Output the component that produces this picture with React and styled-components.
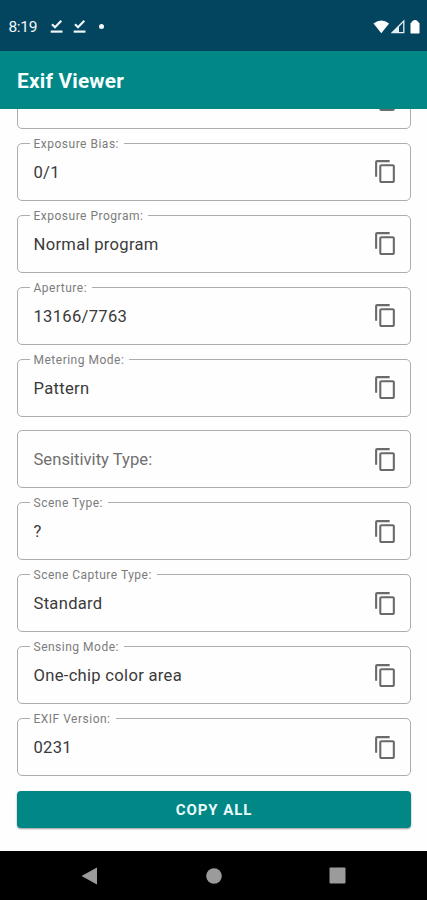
import React from 'react';
import styled, { createGlobalStyle } from 'styled-components';

const GlobalStyle = createGlobalStyle`
  * {
    box-sizing: border-box;
  }
  body {
    margin: 0;
    background: #fff;
    font-family: Roboto, "Liberation Sans", sans-serif;
  }
`;

const Screen = styled.div`
  display: flex;
  flex-direction: column;
  height: 900px;
  overflow: hidden;
  background: #fefefe;
`;

const StatusBar = styled.div`
  display: flex;
  align-items: center;
  flex: none;
  height: 51px;
  padding: 2px 6px 0 8.5px;
  background: #03455f;
  color: #f2f7fa;
`;

const Clock = styled.span`
  width: 41px;
  font-size: 15.5px;
  line-height: 20px;
  letter-spacing: -0.35px;
`;

const Notifications = styled.div`
  display: flex;
  align-items: center;
  flex: 1;
  gap: 10px;
`;

const Dot = styled.span`
  width: 5px;
  height: 5px;
  margin-left: 3px;
  border-radius: 50%;
  background: #f2f7fa;
`;

const SystemIcons = styled.div`
  display: flex;
  align-items: center;
`;

const AppBar = styled.header`
  display: flex;
  align-items: center;
  flex: none;
  height: 58px;
  padding: 2px 17px 0;
  background: #018786;
`;

const Title = styled.h1`
  margin: 0;
  color: #f6ffff;
  font-size: 20.8px;
  font-weight: 700;
  line-height: 26px;
  letter-spacing: 0.2px;
`;

const Content = styled.main`
  flex: 1;
  min-height: 0;
  overflow: hidden;
  padding: 0 16px 0 17px;
`;

const FieldList = styled.div`
  display: flex;
  flex-direction: column;
  gap: 13.93px;
  margin-top: -38.2px;
`;

const Field = styled.div`
  position: relative;
  display: flex;
  align-items: center;
  justify-content: space-between;
  flex: none;
  height: 58px;
  padding: 0 12px 0 15.5px;
  border: 1.5px solid #adadad;
  border-radius: 5px;
`;

const Label = styled.span`
  position: absolute;
  top: -7px;
  left: 11.5px;
  padding: 0 5px 0 4px;
  background: #fefefe;
  color: #7c7c7c;
  font-size: 12px;
  line-height: 14px;
  letter-spacing: 0.5px;
  white-space: nowrap;
`;

const Value = styled.span`
  padding-top: 2px;
  color: ${({ $hint }) => ($hint ? '#707070' : '#3a3a3a')};
  font-size: 16.6px;
  line-height: 20px;
  letter-spacing: ${({ $hint }) => ($hint ? '0.02px' : '0.29px')};
`;

const CopyAll = styled.button`
  display: block;
  width: 100%;
  height: 37px;
  margin: 15px 0 0;
  padding: 0;
  border: 0;
  border-radius: 4px;
  background: #018786;
  box-shadow: 0 1px 2px rgba(0, 0, 0, 0.4);
  color: #e9fbfb;
  font-family: inherit;
  font-size: 15px;
  font-weight: 700;
  letter-spacing: 0.93px;
`;

const NavBar = styled.nav`
  display: flex;
  align-items: center;
  flex: none;
  height: 49px;
  padding: 0 81px;
  justify-content: space-between;
  background: #000;
`;

const fields = [
  { label: '', value: '' },
  { label: 'Exposure Bias:', value: '0/1' },
  { label: 'Exposure Program:', value: 'Normal program' },
  { label: 'Aperture:', value: '13166/7763' },
  { label: 'Metering Mode:', value: 'Pattern' },
  { label: 'Sensitivity Type:', value: '' },
  { label: 'Scene Type:', value: '?' },
  { label: 'Scene Capture Type:', value: 'Standard' },
  { label: 'Sensing Mode:', value: 'One-chip color area' },
  { label: 'EXIF Version:', value: '0231' },
];

const CopyIcon = () => (
  <svg width="25" height="25" viewBox="0 0 24 24" fill="#6a6a6a">
    <path d="M16 1H4c-1.1 0-2 .9-2 2v14h2V3h12V1zm3 4H8c-1.1 0-2 .9-2 2v14c0 1.1.9 2 2 2h11c1.1 0 2-.9 2-2V7c0-1.1-.9-2-2-2zm0 16H8V7h11v14z" />
  </svg>
);

const CheckIcon = () => (
  <svg width="13" height="15" viewBox="0 0 13 15" fill="none" stroke="#f2f7fa">
    <path d="M2 5.2l3 3L11.3 1.8" strokeWidth="2.2" />
    <path d="M0.7 12.6h11.8" strokeWidth="2.2" />
  </svg>
);

// An empty field shows its label in place of the value
const ExifField = ({ label, value }) => (
  <Field>
    {value && <Label>{label}</Label>}
    <Value $hint={!value}>{value || label}</Value>
    <CopyIcon />
  </Field>
);

const App = () => {
  return (
    <Screen>
      <GlobalStyle />
      <StatusBar>
        <Clock>8:19</Clock>
        <Notifications>
          <CheckIcon />
          <CheckIcon />
          <Dot />
        </Notifications>
        <SystemIcons>
          <svg width="48" height="16" viewBox="0 0 48 16">
            <path d="M0.5 4.6Q8.3-1.8 16.1 4.6L8.3 14.2z" fill="#fff" />
            <path d="M30.8 2V13.7H19.2z" fill="none" stroke="#e6eef2" strokeWidth="1.3" />
            <path d="M26 6.8V13.7H19.2z" fill="#e6eef2" />
            <path d="M37.5 4.5l2-2.6q2.5-1.6 5 0l2 2.6v8.9q0 1.2-1 1.2h-7q-1 0-1-1.2z" fill="#fff" />
          </svg>
        </SystemIcons>
      </StatusBar>
      <AppBar>
        <Title>Exif Viewer</Title>
      </AppBar>
      <Content>
        <FieldList>
          {fields.map((field) => (
            <ExifField key={field.label} {...field} />
          ))}
        </FieldList>
        <CopyAll>COPY ALL</CopyAll>
      </Content>
      <NavBar>
        <svg width="17" height="18" viewBox="0 0 17 18">
          <path d="M0.5 9L16 0.5v17z" fill="#9b9b9b" />
        </svg>
        <svg width="16" height="16" viewBox="0 0 16 16">
          <circle cx="8" cy="8" r="7.8" fill="#9b9b9b" />
        </svg>
        <svg width="17" height="17" viewBox="0 0 17 17">
          <rect x="0.5" y="0.5" width="16" height="16" rx="1" fill="#9b9b9b" />
        </svg>
      </NavBar>
    </Screen>
  );
};

export default App;
